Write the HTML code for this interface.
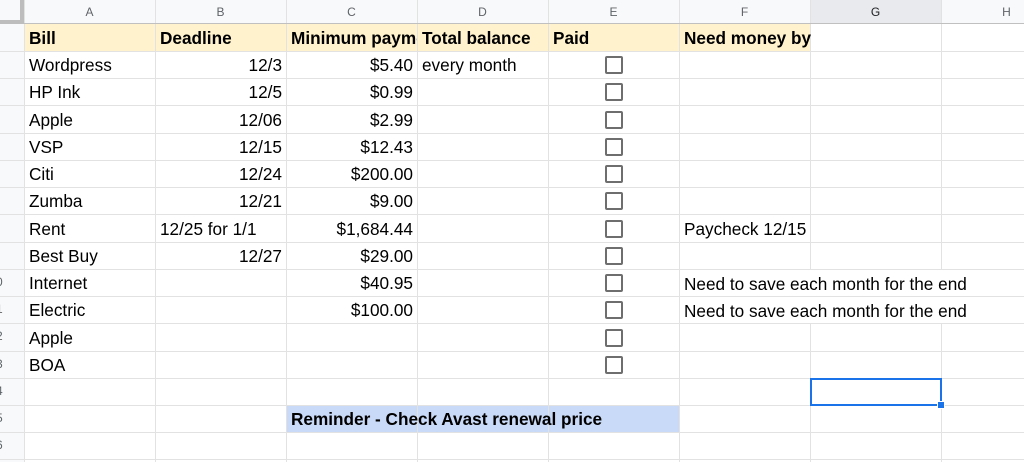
<!DOCTYPE html>
<html><head><meta charset="utf-8"><style>
*{margin:0;padding:0;box-sizing:border-box}
body{width:1024px;height:462px;overflow:hidden;background:#fff;font-family:"Liberation Sans",Arial,sans-serif;position:relative}
.v{position:absolute;top:0;width:1px;height:462px;background:#e2e2e2}
.h{position:absolute;left:0;height:1px;width:1024px;background:#e2e2e2}
.t{position:absolute;font-size:17.2px;color:#000;white-space:nowrap;line-height:29px;height:27px}
.b{font-weight:bold}
.r{text-align:right}
.ch{position:absolute;top:0;height:24px;line-height:24px;font-size:12px;color:#5f6368;text-align:center}
.rh{position:absolute;left:0;width:24px;overflow:hidden;height:27px;line-height:27px;font-size:12px;color:#5f6368}
.rh span{position:absolute;left:-4px}
.cb{position:absolute;left:605px;width:18px;height:18px;border:2px solid #6e6e6e;border-radius:2px}
</style></head><body>
<div style="position:absolute;left:0;top:0;width:1024px;height:24px;background:#f8f9fa"></div>
<div style="position:absolute;left:0;top:0;width:24px;height:462px;background:#f8f9fa"></div>
<div style="position:absolute;left:24px;top:24px;width:786px;height:27px;background:#fff2cc"></div>
<div style="position:absolute;left:286px;top:405px;width:393px;height:27px;background:#c9daf8"></div>
<div style="position:absolute;left:810px;top:0;width:131px;height:24px;background:#e8eaed"></div>
<div class="v" style="left:24px"></div><div class="v" style="left:155px"></div><div class="v" style="left:286px"></div><div class="v" style="left:417px"></div><div class="v" style="left:548px"></div><div class="v" style="left:679px"></div><div class="v" style="left:810px"></div><div class="v" style="left:941px"></div>
<div class="h" style="top:23px;background:#c0c0c0"></div>
<div class="h" style="top:51px"></div><div class="h" style="top:78px"></div><div class="h" style="top:105px"></div><div class="h" style="top:133px"></div><div class="h" style="top:160px"></div><div class="h" style="top:187px"></div><div class="h" style="top:214px"></div><div class="h" style="top:242px"></div><div class="h" style="top:269px"></div><div class="h" style="top:296px"></div><div class="h" style="top:323px"></div><div class="h" style="top:351px"></div><div class="h" style="top:378px"></div><div class="h" style="top:405px"></div><div class="h" style="top:432px"></div><div class="h" style="top:459px"></div>
<div style="position:absolute;left:0;top:0;width:24px;height:24px;border-right:4px solid #bdbdbd;border-bottom:4px solid #bdbdbd;background:#f8f9fa"></div>
<div class="ch" style="left:24px;width:131px">A</div><div class="ch" style="left:155px;width:131px">B</div><div class="ch" style="left:286px;width:131px">C</div><div class="ch" style="left:417px;width:131px">D</div><div class="ch" style="left:548px;width:131px">E</div><div class="ch" style="left:679px;width:131px">F</div><div class="ch" style="left:810px;width:131px;color:#202124">G</div><div class="ch" style="left:941px;width:131px">H</div>
<div class="rh" style="top:269px"><span>0</span></div><div class="rh" style="top:296px"><span>1</span></div><div class="rh" style="top:323px"><span>2</span></div><div class="rh" style="top:351px"><span>3</span></div><div class="rh" style="top:378px"><span>4</span></div><div class="rh" style="top:405px"><span>5</span></div><div class="rh" style="top:432px"><span>6</span></div>

<div class="t b" style="left:29px;top:24px">Bill</div>
<div class="t b" style="left:160px;top:24px">Deadline</div>
<div class="t b" style="left:291px;top:24px;width:126px;overflow:hidden">Minimum payment</div>
<div class="t b" style="left:422px;top:24px">Total balance</div>
<div class="t b" style="left:553px;top:24px">Paid</div>
<div class="t b" style="left:684px;top:24px">Need money by</div>

<div class="t" style="left:29px;top:51px">Wordpress</div><div class="t r" style="left:155px;width:127px;top:51px">12/3</div><div class="t r" style="left:286px;width:127px;top:51px">$5.40</div><div class="t" style="left:422px;top:51px">every month</div>
<div class="t" style="left:29px;top:78px">HP Ink</div><div class="t r" style="left:155px;width:127px;top:78px">12/5</div><div class="t r" style="left:286px;width:127px;top:78px">$0.99</div>
<div class="t" style="left:29px;top:106px">Apple</div><div class="t r" style="left:155px;width:127px;top:106px">12/06</div><div class="t r" style="left:286px;width:127px;top:106px">$2.99</div>
<div class="t" style="left:29px;top:133px">VSP</div><div class="t r" style="left:155px;width:127px;top:133px">12/15</div><div class="t r" style="left:286px;width:127px;top:133px">$12.43</div>
<div class="t" style="left:29px;top:160px">Citi</div><div class="t r" style="left:155px;width:127px;top:160px">12/24</div><div class="t r" style="left:286px;width:127px;top:160px">$200.00</div>
<div class="t" style="left:29px;top:187px">Zumba</div><div class="t r" style="left:155px;width:127px;top:187px">12/21</div><div class="t r" style="left:286px;width:127px;top:187px">$9.00</div>
<div class="t" style="left:29px;top:215px">Rent</div><div class="t" style="left:160px;top:215px">12/25 for 1/1</div><div class="t r" style="left:286px;width:127px;top:215px">$1,684.44</div><div class="t" style="left:684px;top:215px">Paycheck 12/15</div>
<div class="t" style="left:29px;top:242px">Best Buy</div><div class="t r" style="left:155px;width:127px;top:242px">12/27</div><div class="t r" style="left:286px;width:127px;top:242px">$29.00</div>
<div class="t" style="left:29px;top:269px">Internet</div><div class="t r" style="left:286px;width:127px;top:269px">$40.95</div><div class="t" style="left:681px;padding-left:3px;top:270px;height:26px;background:#fff;line-height:28px">Need to save each month for the end</div>
<div class="t" style="left:29px;top:296px">Electric</div><div class="t r" style="left:286px;width:127px;top:296px">$100.00</div><div class="t" style="left:681px;padding-left:3px;top:297px;height:26px;background:#fff;line-height:28px">Need to save each month for the end</div>
<div class="t" style="left:29px;top:324px">Apple</div>
<div class="t" style="left:29px;top:351px">BOA</div>
<div class="t b" style="left:291px;top:405px">Reminder - Check Avast renewal price</div>

<div class="cb" style="top:56px"></div><div class="cb" style="top:83px"></div><div class="cb" style="top:111px"></div><div class="cb" style="top:138px"></div><div class="cb" style="top:165px"></div><div class="cb" style="top:192px"></div><div class="cb" style="top:220px"></div><div class="cb" style="top:247px"></div><div class="cb" style="top:274px"></div><div class="cb" style="top:301px"></div><div class="cb" style="top:329px"></div><div class="cb" style="top:356px"></div>

<div style="position:absolute;left:810px;top:378px;width:132px;height:28px;border:2px solid #1a73e8"></div>
<div style="position:absolute;left:937px;top:401px;width:8px;height:8px;background:#1a73e8;border:1px solid #fff"></div>
</body></html>
